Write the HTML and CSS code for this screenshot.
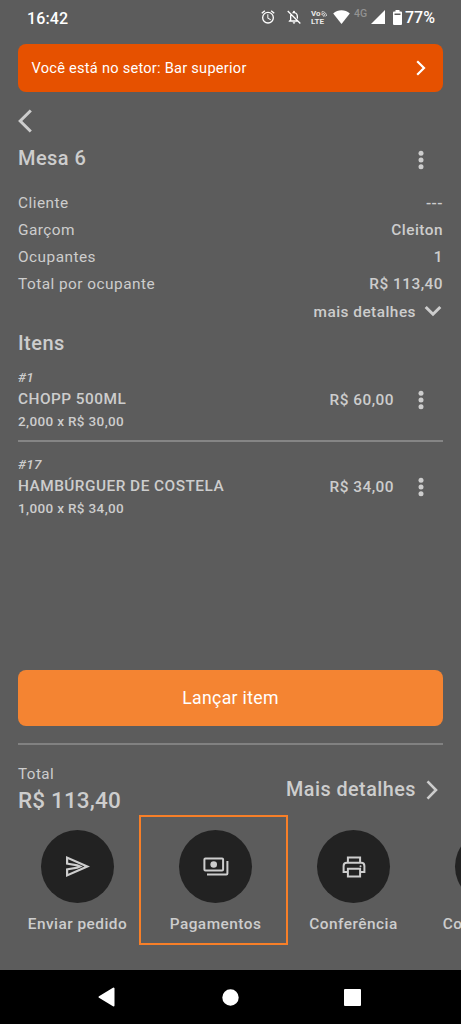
FILE: index.html
```html
<!DOCTYPE html>
<html lang="pt-BR">
<head>
<meta charset="utf-8">
<title>Mesa 6</title>
<link rel="stylesheet" href="styles.css">
</head>
<body>
<div class="screen">
  <header class="status">
    <span class="clock">16:42</span>
    <div class="status-icons">
      <svg class="ic-alarm" width="16" height="16" viewBox="0 0 24 24"><path d="M22 5.700l-4.600-3.900-1.300 1.500 4.600 3.900L22 5.700zM7.900 3.400L6.600 1.900 2 5.700l1.300 1.500 4.600-3.800zM12.500 8H11v6l4.700 2.900.8-1.200-4-2.400V8zM12 4a9 9 0 1 0 0 18 9 9 0 0 0 0-18zm0 16a7 7 0 1 1 0-14 7 7 0 0 1 0 14z"/></svg>
      <svg class="ic-bell" width="16" height="16" viewBox="0 0 24 24"><path d="M12 22a2 2 0 0 0 2-2h-4c0 1.100.9 2 2 2zm4-5H8v-6.500c0-.8.2-1.500.5-2.200L7.100 6.900C6.400 8 6 9.400 6 11v5l-2 2v1h14.200l-2-2zM12 6.500c2.500 0 4 2 4 4.500v2.200l2 2V11c0-3.100-1.600-5.600-4.500-6.300V4a1.500 1.500 0 0 0-3 0v.7c-.6.1-1.200.4-1.700.7l1.500 1.500c.5-.3 1.100-.4 1.700-.4zM3.300 2.200L1.900 3.600l18.900 18.900 1.400-1.400z"/></svg>
      <div class="volte"><span>Vo<svg width="6" height="6" viewBox="0 0 6 6"><path d="M.3 3.300A2.500 2.500 0 0 1 2.700 5.700M.3 1.800A4 4 0 0 1 4.200 5.700M.8.500A5 5 0 0 1 5.600 5"/></svg></span><span>LTE</span></div>
      <svg class="ic-wifi" width="17" height="14" viewBox="0 0 17 14"><path d="M8.500 14L.2 3.500C2.600 1.300 5.500.2 8.500.2s5.900 1.100 8.300 3.300z"/></svg>
      <span class="net">4G</span>
      <svg class="ic-signal" width="14" height="14" viewBox="0 0 14 14"><path d="M14 0v14H0z"/></svg>
      <svg class="ic-battery" width="9" height="15" viewBox="0 0 9 15"><path fill-rule="evenodd" d="M2.500 0h4v1.500H8q1 0 1 1V14q0 1-1 1H1q-1 0-1-1V2.500q0-1 1-1h1.500zM1.500 3.500v1.600h6V3.500z"/></svg>
      <span class="pct">77%</span>
    </div>
  </header>

  <div class="banner">
    <span>Você está no setor: Bar superior</span>
    <svg class="line-icon" width="10" height="16" viewBox="0 0 10 16"><path d="M1.200 1.300L8 8l-6.800 6.700"/></svg>
  </div>

  <main class="content">
    <svg class="back line-icon" width="14" height="24" viewBox="0 0 14 24"><path d="M12.800 1.500L2.200 12l10.600 10.500"/></svg>
    <div class="title-row">
      <h1>Mesa 6</h1>
      <svg class="dots" width="6" height="20" viewBox="0 0 6 20"><circle cx="3" cy="3.200" r="2.500"/><circle cx="3" cy="10" r="2.500"/><circle cx="3" cy="16.800" r="2.500"/></svg>
    </div>
    <dl class="info">
      <div><dt>Cliente</dt><dd>---</dd></div>
      <div><dt>Garçom</dt><dd>Cleiton</dd></div>
      <div><dt>Ocupantes</dt><dd>1</dd></div>
      <div><dt>Total por ocupante</dt><dd>R$ 113,40</dd></div>
    </dl>
    <div class="more">
      <span>mais detalhes</span>
      <svg class="line-icon" width="18" height="12" viewBox="0 0 18 12"><path d="M1.700 2L9 9.200 16.300 2"/></svg>
    </div>
    <h2>Itens</h2>
    <section class="item">
      <div class="item-text"><em>#1</em><strong>CHOPP 500ML</strong><small>2,000 x R$ 30,00</small></div>
      <span class="price">R$ 60,00</span>
      <svg class="dots" width="6" height="20" viewBox="0 0 6 20"><circle cx="3" cy="3.200" r="2.500"/><circle cx="3" cy="10" r="2.500"/><circle cx="3" cy="16.800" r="2.500"/></svg>
    </section>
    <section class="item">
      <div class="item-text"><em>#17</em><strong>HAMBÚRGUER DE COSTELA</strong><small>1,000 x R$ 34,00</small></div>
      <span class="price">R$ 34,00</span>
      <svg class="dots" width="6" height="20" viewBox="0 0 6 20"><circle cx="3" cy="3.200" r="2.500"/><circle cx="3" cy="10" r="2.500"/><circle cx="3" cy="16.800" r="2.500"/></svg>
    </section>
  </main>

  <footer class="bottom">
    <button class="launch">Lançar item</button>
    <div class="total">
      <div class="total-text"><span class="total-label">Total</span><span class="total-value">R$ 113,40</span></div>
      <div class="total-more">
        <span>Mais detalhes</span>
        <svg class="line-icon" width="12" height="20" viewBox="0 0 12 20"><path d="M1.500 1.300L10 10l-8.500 8.700"/></svg>
      </div>
    </div>
    <div class="actions">
      <div class="action">
        <span class="disc"><svg class="ic-send" width="24" height="21" viewBox="0 0 24 21"><path fill-rule="evenodd" d="M0 0l24 10.500L0 21v-8.500l11.500-2L0 8.500zM2.200 3.300v3.400l9.300 1.500 5.300 2.300-5.300 2.300-9.300 1.500v3.400l16.300-7.200z"/></svg></span>
        <span class="label">Enviar pedido</span>
      </div>
      <div class="action selected">
        <span class="disc"><svg class="ic-pay" width="26" height="20" viewBox="0 0 26 20"><rect x="1.400" y="1.400" width="18.700" height="12.200" rx="1"/><path d="M24.400 4v12.600q0 1-1 1H4"/><circle cx="10.700" cy="7.500" r="3.300"/></svg></span>
        <span class="label">Pagamentos</span>
      </div>
      <div class="action">
        <span class="disc"><svg class="ic-print" width="24" height="22" viewBox="0 0 24 22"><path d="M5.900 6.800V1.500h12.200v5.300M5.900 16H1.600V10q0-3.200 3.200-3.200h14.400q3.200 0 3.200 3.200v6h-4.300M5.900 12.800h12.200v7.700H5.900z"/><circle cx="18.500" cy="10.200" r="1"/></svg></span>
        <span class="label">Conferência</span>
      </div>
      <div class="action">
        <span class="disc"></span>
        <span class="label">Comprovante</span>
      </div>
    </div>
  </footer>

  <nav class="nav">
    <svg width="17" height="20" viewBox="0 0 17 20"><path d="M15.500 1.500v17L1.500 10z"/></svg>
    <svg width="17" height="17" viewBox="0 0 17 17"><circle cx="8.500" cy="8.500" r="7.200"/></svg>
    <svg width="17" height="17" viewBox="0 0 17 17"><path d="M1 1h15v15H1z"/></svg>
  </nav>
</div>
</body>
</html>
```
FILE: styles.css
```css
*, *::after { box-sizing: border-box; margin: 0; padding: 0; }
body { background: #5c5c5c; }
.screen {
  width: 461px; height: 1024px; overflow: hidden;
  display: flex; flex-direction: column;
  background: #5c5c5c; color: #cdcdcd;
  font-family: Roboto, sans-serif; font-size: 15.400px; line-height: 20px; letter-spacing: .47px;
  white-space: nowrap;
}
svg { display: block; flex: none; fill: currentColor; }
.line-icon { fill: none; stroke: currentColor; stroke-width: 2.6; }

.status { height: 36px; padding: 0 27px; display: flex; align-items: flex-start; justify-content: space-between; color: #fff; letter-spacing: 0; }
.clock { margin-top: 9px; font-size: 16px; font-weight: 500; letter-spacing: .1px; }
.status-icons { display: flex; align-items: center; height: 34px; }
.ic-bell { margin-left: 10px; }
.volte { margin: 2px 0 0 9px; width: 17px; font-size: 8px; line-height: 8px; font-weight: 700; color: #e8e8e8; display: flex; flex-direction: column; }
.volte span { display: flex; align-items: center; height: 8px; }
.volte svg { fill: none; stroke: currentColor; stroke-width: .8; }
.ic-wifi { margin-left: 5px; }
.net { margin: -6px 0 0 4px; font-size: 10.500px; font-weight: 500; color: #929292; width: 14px; }
.ic-signal { margin-left: 3px; }
.ic-battery { margin-left: 8px; }
.pct { margin: 2px 0 0 3px; font-size: 16px; font-weight: 500; width: 29px; }

.banner {
  margin: 7.500px 18px 0; height: 48px; padding: 0 17px 0 13.500px; border-radius: 8px;
  background: #e65100; color: #fff; font-size: 14.600px; letter-spacing: .25px;
  display: flex; align-items: center; justify-content: space-between;
}
.banner span { padding-top: 1px; }
.banner svg { stroke-width: 2.2; }

.content { flex: 1; padding: 17.500px 18px 0; }
.back { stroke-width: 3; }
.title-row { height: 48px; display: flex; align-items: center; justify-content: space-between; padding-right: 19.500px; }
h1, h2 { font-size: 20px; font-weight: 500; line-height: 24px; letter-spacing: .45px; }
h1 { padding-top: 2px; }
.title-row .dots { margin-top: 5px; }
.info { margin-top: 8px; }
.info div { height: 27px; display: flex; align-items: center; justify-content: space-between; }
dd, .more { font-weight: 500; }
.more { height: 28px; display: flex; align-items: center; justify-content: flex-end; gap: 8px; padding-right: 1px; }
.more span { padding-top: 1px; }
.more svg { stroke-width: 3; }
h2 { margin-top: 6px; }
.item { display: flex; align-items: center; padding: 11px 19.500px 8px 0; }
.item + .item { border-top: 2px solid #858585; }
.item-text { flex: 1; display: flex; flex-direction: column; line-height: 22px; }
.item-text em, .item-text small { font-size: 13.500px; font-weight: 500; letter-spacing: .35px; }
.item-text strong, .price { font-weight: 500; }
.price { margin-right: 23.500px; padding-top: 2px; }
.item .dots { margin-top: 1.500px; }

.bottom { height: 300px; overflow: hidden; }
.launch {
  display: block; width: 425px; height: 56px; margin: 0 18px; border: 0; border-radius: 8px;
  background: #f48432; color: #fff; font: 400 17.700px/20px Roboto, sans-serif; letter-spacing: .3px;
}
.total { margin: 17px 18px 0; border-top: 2px solid #818181; height: 87px; padding-top: 19px; display: flex; justify-content: space-between; }
.total-text { display: flex; flex-direction: column; }
.total-label { font-size: 15.200px; }
.total-value { font-size: 22.500px; line-height: 32px; font-weight: 500; letter-spacing: .15px; }
.total-more { height: 51px; display: flex; align-items: center; gap: 10px; padding-right: 5px; font-size: 19.800px; font-weight: 500; }
.actions { display: flex; margin-left: 8.500px; width: 552px; }
.action { position: relative; flex: none; width: 138px; height: 130px; display: flex; flex-direction: column; align-items: center; }
.disc { width: 73px; height: 73px; border-radius: 50%; background: #222; display: flex; align-items: center; justify-content: center; }
.label { margin-top: 11px; font-weight: 500; }
/* Highlight frame lies over the action and the gap above it */
.selected::after { content: ""; position: absolute; left: -7.500px; top: -15px; width: 148.500px; height: 130px; border: 2px solid #f77f28; }
.ic-pay, .ic-print { fill: none; stroke: currentColor; stroke-width: 2; }
.ic-pay circle, .ic-print circle { fill: currentColor; stroke: none; }

.nav { height: 54px; background: #000; color: #fff; display: flex; align-items: center; justify-content: space-between; padding: 0 100px 0 98px; }
.nav svg { stroke: #fff; stroke-width: 2; stroke-linejoin: round; }
.nav svg:nth-child(2) { margin-left: 2px; }
```
